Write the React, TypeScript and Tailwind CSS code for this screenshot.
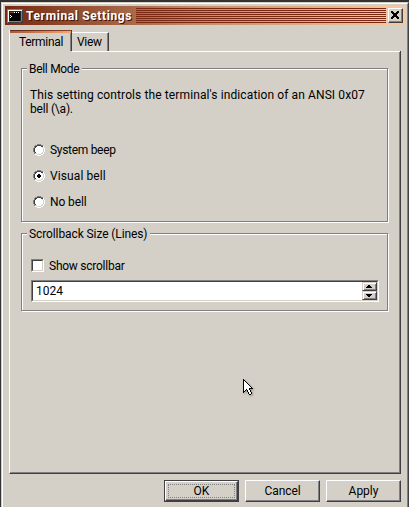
import React from "react";

const RADIO = [
  "....gggg....",
  "..ggddddgg..",
  ".gddwwwwddw.",
  ".gdwwwwwwlw.",
  "gdwwwwwwwwlw",
  "gdwwwwwwwwlw",
  "gdwwwwwwwwlw",
  "gdwwwwwwwwlw",
  ".gdwwwwwwlw.",
  ".gllwwwwllw.",
  "..wwllllww..",
  "....wwww....",
];

const CURSOR = [
  "k...........",
  "kk..........",
  "kwk.........",
  "kwwk........",
  "kwwwk.......",
  "kwwwwk......",
  "kwwwwwk.....",
  "kwwwwwwk....",
  "kwwwwwwwk...",
  "kwwwwwkkkk..",
  "kwwkwwk.....",
  "kwk.kwwk....",
  "kk..kwwk....",
  "k....kwwk...",
  ".....kwwk...",
  "......kk....",
];

const TERMINAL = [
  "gggggggggggggggg",
  "gwwwwwwwwwwwwwwd",
  "gwbbbbbbbbbbbbgd",
  "gwbrrrrwkwkwkbgd",
  "gwbkkkkkkkkkkbgd",
  "gwbkkkkkkkkkkbgd",
  "gwbwkkkkkkkkkbgd",
  "gwbkwkkkkkkkkbgd",
  "gwbwkkkkkkkkkbgd",
  "gwbkkkkkkkkkkbgd",
  "gwbkkkkkkkkkkbgd",
  "gwbkkkkkkkkkkbgd",
  "gwggggggggggggdd",
  "gddddddddddddddd",
];

const CROSS = ["kk....kk", "kkk..kkk", ".kkkkkk.", "..kkkk..", "..kkkk..", ".kkkkkk.", "kkk..kkk", "kk....kk"];
const UP = ["..kk..", ".kkkk.", "kkkkkk"];
const DOWN = ["kkkkkk", ".kkkk.", "..kk.."];

const COLORS: Record<string, string> = {
  g: "#808080",
  d: "#404044",
  w: "#ffffff",
  l: "#d4d0c8",
  k: "#000000",
  b: "#202020",
  r: "#8b432c",
};

function Pixels({ rows, className = "" }: { rows: string[]; className?: string }) {
  return (
    <svg
      className={`block shrink-0 ${className}`}
      width={rows[0].length}
      height={rows.length}
      shapeRendering="crispEdges"
    >
      {rows.flatMap((row, y) =>
        row.split("").map((c, x) =>
          c === "." ? null : <rect key={`${x}-${y}`} x={x} y={y} width="1" height="1" fill={COLORS[c]} />
        )
      )}
    </svg>
  );
}

function Radio({ label, checked, track }: { label: string; checked?: boolean; track: string }) {
  return (
    <label className="flex h-[26px] items-center">
      <span className="relative">
        <Pixels rows={RADIO} />
        {checked && (
          <Pixels rows={[".kk.", "kkkk", "kkkk", ".kk."]} className="absolute left-1 top-1" />
        )}
      </span>
      <span className={`ml-[5px] ${track}`}>{label}</span>
    </label>
  );
}

function GroupBox({
  title,
  track,
  className,
  children,
}: {
  title: string;
  track: string;
  className: string;
  children: React.ReactNode;
}) {
  return (
    <section className={`w-[367px] border border-[#808080] shadow-[1px_1px_0_#fff,inset_1px_1px_0_#fff] ${className}`}>
      <h2 className={`-mt-[7px] ml-[5px] h-[14px] w-fit bg-[#d4d0c8] pl-[2px] pr-[3px] leading-[14px] ${track}`}>
        {title}
      </h2>
      {children}
    </section>
  );
}

function Button({ label, focused, track }: { label: string; focused?: boolean; track: string }) {
  return (
    <button
      className={`h-[22px] w-[75px] border bg-[#d4d0c8] ${
        focused
          ? "border-[#404044] p-0"
          : "border-b-[#404044] border-l-white border-r-[#404044] border-t-white shadow-[inset_-1px_-1px_0_#808080]"
      }`}
    >
      <span
        className={`flex h-full items-center justify-center ${
          focused
            ? "border border-b-[#404044] border-l-white border-r-[#404044] border-t-white p-[2px] shadow-[inset_-1px_-1px_0_#808080]"
            : ""
        }`}
      >
        <span
          className={`flex items-center justify-center leading-[14px] ${track} ${
            focused ? "h-full w-full border border-dotted border-[#808080]" : ""
          }`}
        >
          {label}
        </span>
      </span>
    </button>
  );
}

export default function App() {
  return (
    <div className="relative h-[507px] w-[409px] overflow-hidden bg-[#353232] pl-px pt-[2px] font-['Roboto','Liberation_Sans',sans-serif] text-[12px] leading-[14px] text-black">
      <div className="h-[505px] w-[408px] border-l border-r border-t border-l-[#d4d0c8] border-r-[#404044] border-t-[#d4d0c8]">
        <div className="h-[504px] border-l border-r border-t border-l-white border-r-[#808080] border-t-white bg-[#d4d0c8] pl-[2px] pt-[2px]">
          <header className="flex h-[19px] w-[400px] items-center bg-linear-to-r from-[#752910] via-[#c68f69] to-[#f7cba0] pl-[2px]">
            <Pixels rows={TERMINAL} />
            <h1 className="ml-[3px] w-[110px] whitespace-nowrap font-bold tracking-[0.62px] text-white [text-shadow:1px_1px_0_#401008]">
              Terminal Settings
            </h1>
            <div className="h-[15px] w-[250px] bg-[repeating-linear-gradient(to_bottom,#792811_0_1px,transparent_1px_2px)]" />
            <button className="ml-[2px] flex h-[15px] w-[15px] items-center justify-center border border-b-[#404044] border-l-white border-r-[#404044] border-t-white bg-[#d4d0c8] pb-px pr-px shadow-[inset_-1px_-1px_0_#808080]">
              <Pixels rows={CROSS} />
            </button>
          </header>

          <nav className="ml-[4px] mt-[5px] flex h-[21px] w-[392px] items-end">
            <div className="h-[21px] w-[63px] border-l border-r border-l-white border-r-[#404044] shadow-[inset_-1px_0_0_#808080]">
              <div className="h-px bg-linear-to-r from-[#602818] to-[#8b4628]" />
              <div className="h-[2px] bg-linear-to-r from-[#a75836] to-[#f6a572]" />
              <div className="ml-[9px] mt-[2px] tracking-[-0.3px]">Terminal</div>
            </div>
            <div className="h-[19px] w-[37px] border-r border-t border-r-[#404044] border-t-white shadow-[inset_-1px_0_0_#808080]">
              <div className="ml-[5px] mt-[2px] tracking-[-0.3px]">View</div>
            </div>
          </nav>

          <main className="ml-[4px] h-[423px] w-[392px] border-b border-l border-r border-b-[#404044] border-l-white border-r-[#404044] shadow-[inset_-1px_-1px_0_#808080]">
            <div className="ml-[62px] h-px bg-white" />
            <GroupBox title="Bell Mode" track="tracking-[-0.3px]" className="ml-[11px] mt-[16px] h-[154px]">
              <p className="ml-[8px] mt-[12px] whitespace-nowrap">
                <span className="tracking-[0.11px]">This setting controls the terminal's indication of an ANSI 0x07</span>
                <br />
                <span className="tracking-[-0.2px]">bell (\a).</span>
              </p>
              <div className="ml-[11px] mt-[21px]">
                <Radio label="System beep" track="tracking-[-0.3px]" />
                <Radio label="Visual bell" checked track="tracking-[0.1px]" />
                <Radio label="No bell" track="tracking-[-0.1px]" />
              </div>
            </GroupBox>
            <GroupBox
              title="Scrollback Size (Lines)"
              track="tracking-[-0.1px]"
              className="ml-[11px] mt-[11px] h-[78px]"
            >
              <label className="ml-[9px] mt-[18px] flex h-[13px] items-center">
                <span className="h-[13px] w-[13px] border border-b-white border-l-[#808080] border-r-white border-t-[#808080]">
                  <span className="block h-[11px] w-[11px] border border-b-[#d4d0c8] border-l-[#404044] border-r-[#d4d0c8] border-t-[#404044] bg-white" />
                </span>
                <span className="ml-[5px] tracking-[-0.25px]">Show scrollbar</span>
              </label>
              <div className="ml-[9px] mt-[8px] h-[22px] w-[348px] border border-b-white border-l-[#808080] border-r-white border-t-[#808080]">
                <div className="flex h-[20px] justify-between border border-b-[#d4d0c8] border-l-[#404044] border-r-[#d4d0c8] border-t-[#404044] bg-white">
                  <span className="ml-[3px] mt-[2px]">1024</span>
                  <div className="flex w-[15px] flex-col">
                    {[UP, DOWN].map((rows, i) => (
                      <span
                        key={i}
                        className="flex h-[9px] items-center justify-center border border-b-[#404044] border-l-[#d4d0c8] border-r-[#404044] border-t-[#d4d0c8] bg-[#d4d0c8] pr-px shadow-[inset_1px_1px_0_#fff,inset_-1px_-1px_0_#808080]"
                      >
                        <Pixels rows={rows} />
                      </span>
                    ))}
                  </div>
                </div>
              </div>
            </GroupBox>
          </main>

          <footer className="ml-[159px] mt-[6px] flex gap-[6px]">
            <Button label="OK" focused track="" />
            <Button label="Cancel" track="tracking-[-0.1px]" />
            <Button label="Apply" track="tracking-[0px]" />
          </footer>
        </div>
      </div>
      <Pixels
        rows={CURSOR}
        className="absolute left-[243px] top-[379px] [filter:drop-shadow(1px_1px_1px_rgba(0,0,0,0.3))]"
      />
    </div>
  );
}
